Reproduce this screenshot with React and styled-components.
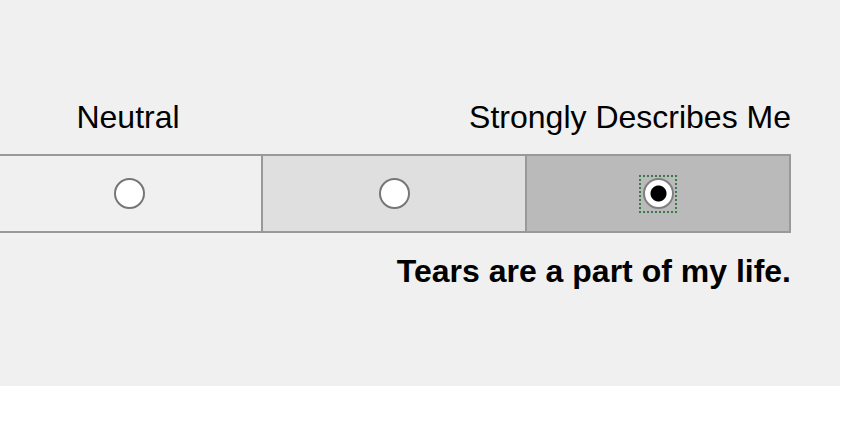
import React, { useState } from "react";
import styled, { createGlobalStyle } from "styled-components";

const GlobalStyle = createGlobalStyle`
  body {
    margin: 0;
    background: #ffffff;
    font-family: "Liberation Sans", Arial, sans-serif;
  }
`;

const choices = [
  { value: 3, shade: "#f0f0f0" },
  { value: 4, shade: "#dfdfdf" },
  { value: 5, shade: "#bababa" },
];

export default function App() {
  const [picked, setPicked] = useState(5);

  return (
    <>
      <GlobalStyle />
      <Panel>
        <Labels>
          <Label>Neutral</Label>
          <Label $align="right">Strongly Describes Me</Label>
        </Labels>
        <Scale>
          {choices.map((c) => (
            <Cell key={c.value} $shade={c.shade}>
              <FocusRing $on={picked === c.value}>
                <Radio
                  type="radio"
                  name="tears"
                  value={c.value}
                  checked={picked === c.value}
                  onChange={() => setPicked(c.value)}
                />
              </FocusRing>
            </Cell>
          ))}
        </Scale>
        <Statement>Tears are a part of my life.</Statement>
      </Panel>
    </>
  );
}

const Panel = styled.section`
  width: 840px;
  height: 386px;
  box-sizing: border-box;
  padding: 99px 49px 0 0;
  background: #f0f0f0;
  overflow: hidden;
`;

const Labels = styled.div`
  display: grid;
  grid-template-columns: 266px 1fr;
  margin-left: -5px;
  margin-bottom: 19px;
`;

const Label = styled.div`
  font-size: 32px;
  line-height: 36px;
  color: #000;
  white-space: nowrap;
  text-align: ${(p) => p.$align || "center"};
`;

const Scale = styled.div`
  display: grid;
  grid-template-columns: repeat(3, 1fr);
  margin-left: -5px;
  border: 2px solid #999999;
  height: 75px;
`;

const Cell = styled.label`
  display: flex;
  align-items: center;
  justify-content: center;
  background: ${(p) => p.$shade};
  & + & {
    border-left: 2px solid #999999;
  }
`;

const FocusRing = styled.span`
  display: flex;
  padding: 1.5px;
  border: 2px dotted ${(p) => (p.$on ? "#3b7a48" : "transparent")};
`;

const Radio = styled.input`
  appearance: none;
  margin: 0;
  width: 31px;
  height: 31px;
  box-sizing: border-box;
  border-radius: 50%;
  border: 2px solid #767676;
  background: #ffffff;
  cursor: pointer;
  outline: none;
  &:checked {
    background: radial-gradient(circle, #000 0 7.5px, #fff 8.5px);
    border-color: #808080;
  }
`;

const Statement = styled.p`
  margin: 20px 0 0;
  font-size: 32px;
  line-height: 36px;
  font-weight: bold;
  text-align: right;
  color: #000;
`;
